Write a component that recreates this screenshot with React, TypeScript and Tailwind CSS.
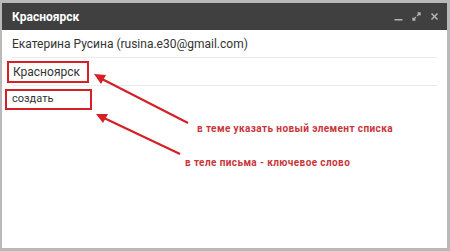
export default function App() {
  return (
    <div className="relative w-[450px] h-[251px] overflow-hidden bg-white border-t-[3px] border-l-2 border-r-[3px] border-b-[3px] border-[#b9b9b9]" style={{ fontFamily: "Roboto, 'Liberation Sans', sans-serif" }}>
      {/* Header */}
      <div className="flex items-center justify-between h-[27px] bg-[#404040] pl-[10px] pr-[8px]">
        <span className="text-white text-[12px] font-bold">Красноярск</span>
        <div className="flex items-center gap-[9px] text-[#b4b4b4]">
          <svg width="9" height="9" viewBox="0 0 9 9">
            <rect x="0.5" y="7" width="8" height="1.5" fill="currentColor" />
          </svg>
          <svg width="9" height="9" viewBox="0 0 9 9" fill="none" stroke="currentColor" strokeWidth="1.3">
            <path d="M5 4 L8 1 M5.5 1 H8 V3.5 M4 5 L1 8 M1 5.5 V8 H3.5" />
          </svg>
          <svg width="9" height="9" viewBox="0 0 9 9" fill="none" stroke="currentColor" strokeWidth="1.5">
            <path d="M1.5 1.5 L7.5 7.5 M7.5 1.5 L1.5 7.5" />
          </svg>
        </div>
      </div>

      {/* Body */}
      <div className="px-[10px]">
        <div className="h-[27px] flex items-center border-b border-[#ebebeb] text-[12px] text-[#333] mt-[1px]">
          Екатерина Русина (rusina.e30@gmail.com)
        </div>
        <div className="flex items-center h-[28px] border-b border-[#ebebeb]">
          <div className="-ml-[5px] w-[82px] h-[22px] border-2 border-[#d42027] flex items-center pl-[4px] text-[12px] text-[#333]">
            Красноярск
          </div>
        </div>
        <div className="flex items-center h-[26px]">
          <div className="-ml-[7px] w-[87px] h-[21px] border-2 border-[#d42027] flex items-center pl-[5px] text-[11px] text-[#333]">
            создать
          </div>
        </div>
        <div className="ml-[185px] mt-[9px] text-[10px] font-bold tracking-[0.4px] text-[#c8353b]">
          в теме указать новый элемент списка
        </div>
        <div className="ml-[173px] mt-[19px] text-[10px] font-bold tracking-[0.4px] text-[#c8353b]">
          в теле письма - ключевое слово
        </div>
      </div>

      {/* Annotation arrows */}
      <svg className="absolute left-0 top-0 pointer-events-none" width="450" height="251">
        <g stroke="#d42027" strokeWidth="2.2" fill="#d42027">
          <line x1="186" y1="120" x2="100" y2="76" />
          <polygon points="92,71 104,72 99,81" stroke="none" />
          <line x1="178" y1="151" x2="102" y2="115" />
          <polygon points="94,111 106,111 101,120" stroke="none" />
        </g>
      </svg>
    </div>
  );
}
